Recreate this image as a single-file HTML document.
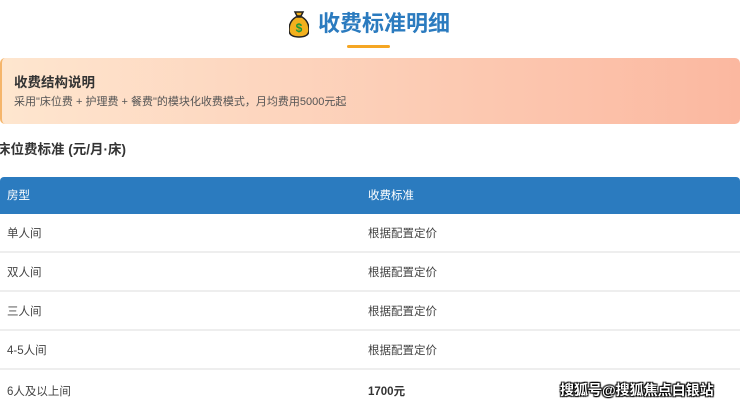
<!DOCTYPE html>
<html><head><meta charset="utf-8"><style>
*{margin:0;padding:0;box-sizing:border-box}
body{width:740px;height:407px;overflow:hidden;background:#fff;font-family:"Liberation Sans","Noto Sans CJK SC",sans-serif;position:relative}
.title{position:absolute;left:318px;top:9px;font-size:22px;font-weight:bold;color:#2b7bbf;line-height:30px;letter-spacing:0}
.icon{position:absolute;left:289px;top:11px}
.line{position:absolute;left:347px;top:45px;width:43px;height:3px;background:#f5a623;border-radius:2px}
.card{position:absolute;left:0;top:58px;width:740px;height:66px;border-radius:5px;border-left:2px solid #f5b56a;background:linear-gradient(90deg,#fee6cf,#fbb8a0)}
.card h3{position:absolute;left:12px;top:16px;font-size:13.5px;color:#333;line-height:18px}
.card p{position:absolute;left:12px;top:36px;font-size:11px;color:#555;line-height:16px}
.sub{position:absolute;left:-3px;top:141px;font-size:13.5px;font-weight:bold;color:#333;line-height:18px}
.th{position:absolute;left:0;top:177px;width:740px;height:37px;background:#2b7bbf;border-radius:4px 4px 0 0;color:#fff;font-size:11.5px}
.th span,.row span{position:absolute;line-height:16px}
.row{position:absolute;left:0;width:740px;height:39px;font-size:11.5px;color:#444;border-bottom:2px solid #eee}
.wm{position:absolute;left:560px;top:381px;font-size:14px;color:#fff;font-weight:bold;text-shadow:0 0 1px #000,1px 1px 1px #000,-1px -1px 1px #000,1px -1px 1px #000,-1px 1px 1px #000;line-height:18px}
</style></head><body>
<svg class="icon" width="20" height="27" viewBox="0 0 20 27">
<path d="M6 1h8l-2 4h-4z" fill="#f2b01e" stroke="#222" stroke-width="1.5"/>
<path d="M7 6h6c5 3 7 8 7 13 0 5-4 7-10 7S0 24 0 19c0-5 2-10 7-13z" fill="#f2b01e" stroke="#222" stroke-width="1.5"/>
<text x="10" y="21" font-size="12" font-weight="bold" fill="#1a9a3a" text-anchor="middle" font-family="Liberation Sans">$</text>
</svg>
<div class="title">收费标准明细</div>
<div class="line"></div>
<div class="card"><h3>收费结构说明</h3><p>采用"床位费 + 护理费 + 餐费"的模块化收费模式，月均费用5000元起</p></div>
<div class="sub">床位费标准 (元/月·床)</div>
<div class="th"><span style="left:7px;top:11px">房型</span><span style="left:368px;top:11px">收费标准</span></div>
<div class="row" style="top:214px"><span style="left:7px;top:12px">单人间</span><span style="left:368px;top:12px">根据配置定价</span></div>
<div class="row" style="top:253px"><span style="left:7px;top:12px">双人间</span><span style="left:368px;top:12px">根据配置定价</span></div>
<div class="row" style="top:292px"><span style="left:7px;top:12px">三人间</span><span style="left:368px;top:12px">根据配置定价</span></div>
<div class="row" style="top:331px"><span style="left:7px;top:12px">4-5人间</span><span style="left:368px;top:12px">根据配置定价</span></div>
<div class="row" style="top:370px;border:none"><span style="left:7px;top:14px">6人及以上间</span><span style="left:368px;top:14px;font-weight:bold;color:#333">1700元</span></div>
<div class="wm">搜狐号@搜狐焦点白银站</div>
</body></html>
